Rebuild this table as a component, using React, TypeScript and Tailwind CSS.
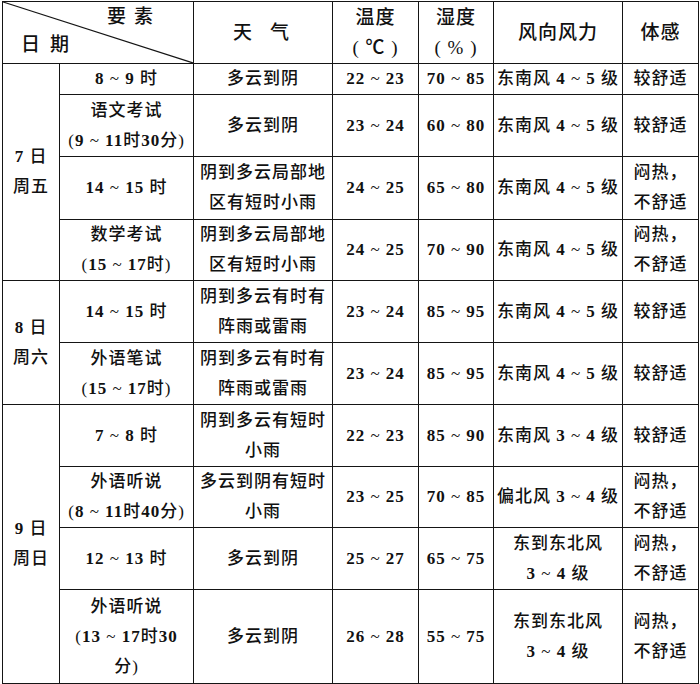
import React from "react";

type Row = {
  date?: string[];
  span?: number;
  time: string[];
  weather: string[];
  temp: string;
  hum: string;
  wind: string[];
  feel: string[];
  h: number;
};

const ROWS: Row[] = [
  { date: ["7 日", "周五"], span: 4, time: ["8 ~ 9 时"], weather: ["多云到阴"], temp: "22 ~ 23", hum: "70 ~ 85", wind: ["东南风 4 ~ 5 级"], feel: ["较舒适"], h: 31 },
  { time: ["语文考试", "(9 ~ 11时30分)"], weather: ["多云到阴"], temp: "23 ~ 24", hum: "60 ~ 80", wind: ["东南风 4 ~ 5 级"], feel: ["较舒适"], h: 62 },
  { time: ["14 ~ 15 时"], weather: ["阴到多云局部地", "区有短时小雨"], temp: "24 ~ 25", hum: "65 ~ 80", wind: ["东南风 4 ~ 5 级"], feel: ["闷热，", "不舒适"], h: 63 },
  { time: ["数学考试", "(15 ~ 17时)"], weather: ["阴到多云局部地", "区有短时小雨"], temp: "24 ~ 25", hum: "70 ~ 90", wind: ["东南风 4 ~ 5 级"], feel: ["闷热，", "不舒适"], h: 60 },
  { date: ["8 日", "周六"], span: 2, time: ["14 ~ 15 时"], weather: ["阴到多云有时有", "阵雨或雷雨"], temp: "23 ~ 24", hum: "85 ~ 95", wind: ["东南风 4 ~ 5 级"], feel: ["较舒适"], h: 62 },
  { time: ["外语笔试", "(15 ~ 17时)"], weather: ["阴到多云有时有", "阵雨或雷雨"], temp: "23 ~ 24", hum: "85 ~ 95", wind: ["东南风 4 ~ 5 级"], feel: ["较舒适"], h: 62 },
  { date: ["9 日", "周日"], span: 4, time: ["7 ~ 8 时"], weather: ["阴到多云有短时", "小雨"], temp: "22 ~ 23", hum: "85 ~ 90", wind: ["东南风 3 ~ 4 级"], feel: ["较舒适"], h: 62 },
  { time: ["外语听说", "(8 ~ 11时40分)"], weather: ["多云到阴有短时", "小雨"], temp: "23 ~ 25", hum: "70 ~ 85", wind: ["偏北风 3 ~ 4 级"], feel: ["闷热，", "不舒适"], h: 61 },
  { time: ["12 ~ 13 时"], weather: ["多云到阴"], temp: "25 ~ 27", hum: "65 ~ 75", wind: ["东到东北风", "3 ~ 4 级"], feel: ["闷热，", "不舒适"], h: 62 },
  { time: ["外语听说", "(13 ~ 17时30", "分)"], weather: ["多云到阴"], temp: "26 ~ 28", hum: "55 ~ 75", wind: ["东到东北风", "3 ~ 4 级"], feel: ["闷热，", "不舒适"], h: 94 },
];

const cell = "border-[1.5px] border-[#151515] text-center align-middle p-0 leading-[30px]";

// digits in the print are set in a heavier roman face
function Text({ t }: { t: string }) {
  const parts = t.split(/([0-9]+)/);
  return (
    <>
      {parts.map((p, i) =>
        /^[0-9]+$/.test(p) ? (
          <span key={i} className="font-bold">{p}</span>
        ) : (
          <span key={i}>{p}</span>
        )
      )}
    </>
  );
}

function Lines({ items }: { items: string[] }) {
  return (
    <>
      {items.map((t, i) => (
        <div key={i} className="whitespace-pre">
          <Text t={t} />
        </div>
      ))}
    </>
  );
}

export default function App() {
  return (
    <div className="w-[700px] h-[684px] bg-white pt-[1px] pl-[2px] text-[#111] font-['Liberation_Serif','Noto_Sans_CJK_SC',serif]">
      <table className="border-collapse table-fixed w-[696px]">
        <colgroup>
          <col className="w-[57px]" />
          <col className="w-[134px]" />
          <col className="w-[139px]" />
          <col className="w-[86px]" />
          <col className="w-[75px]" />
          <col className="w-[129px]" />
          <col className="w-[76px]" />
        </colgroup>
        <thead>
          <tr className="h-[62px] text-[19px] tracking-[1px]">
            <th colSpan={2} className={`${cell} relative font-medium`}>
              <svg className="absolute inset-0 w-full h-full" viewBox="0 0 191 62" preserveAspectRatio="none">
                <line x1="0" y1="0" x2="191" y2="62" stroke="#151515" strokeWidth="1.2" />
              </svg>
              <div className="flex flex-col h-[60px] leading-[28px]">
                <div className="pl-[104px] text-left tracking-[8px]">要素</div>
                <div className="pl-[18px] text-left tracking-[10px]">日期</div>
              </div>
            </th>
            <th className={`${cell} font-medium tracking-[18px] pl-[14px]`}>天气</th>
            <th className={`${cell} font-medium`}>
              <Lines items={["温度", "( ℃ )"]} />
            </th>
            <th className={`${cell} font-medium`}>
              <Lines items={["湿度", "( % )"]} />
            </th>
            <th className={`${cell} font-medium`}>风向风力</th>
            <th className={`${cell} font-medium`}>体感</th>
          </tr>
        </thead>
        <tbody className="text-[17px] tracking-[1px] font-medium">
          {ROWS.map((r, i) => (
            <tr key={i} style={{ height: r.h }}>
              {r.date && (
                <td rowSpan={r.span} className={cell}>
                  <Lines items={r.date} />
                </td>
              )}
              <td className={cell}>
                <Lines items={r.time} />
              </td>
              <td className={cell}>
                <Lines items={r.weather} />
              </td>
              <td className={cell}>
                <Text t={r.temp} />
              </td>
              <td className={cell}>
                <Text t={r.hum} />
              </td>
              <td className={cell}>
                <Lines items={r.wind} />
              </td>
              <td className={cell}>
                <Lines items={r.feel} />
              </td>
            </tr>
          ))}
        </tbody>
      </table>
    </div>
  );
}
